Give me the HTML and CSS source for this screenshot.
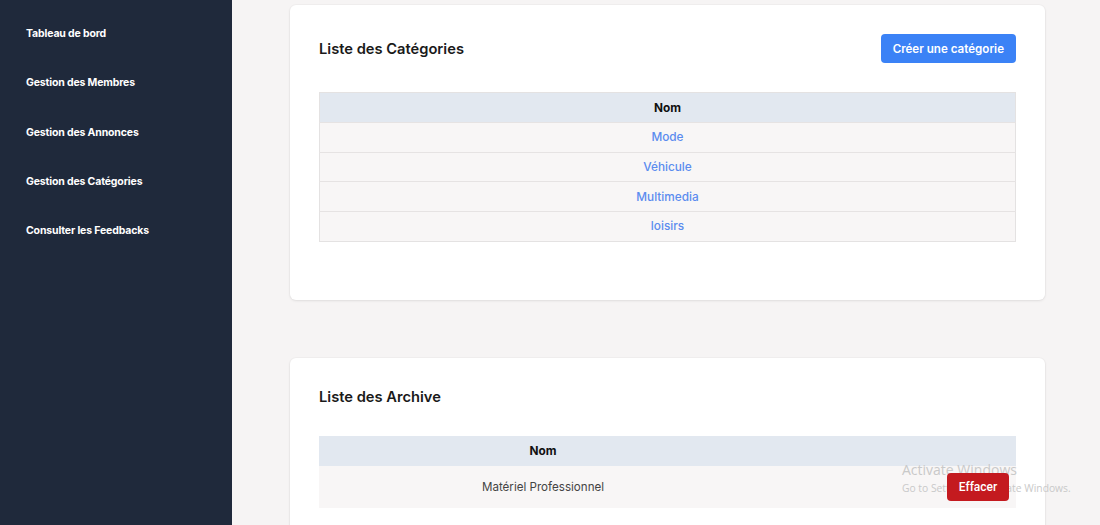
FILE: index.html
```html
<!DOCTYPE html>
<html lang="fr">
<head>
<meta charset="utf-8">
<title>Admin</title>
<link rel="stylesheet" href="styles.css">
</head>
<body>
<div class="layout">
  <aside class="sidebar">
    <nav class="nav">
      <a class="nav-item">Tableau de bord</a>
      <a class="nav-item">Gestion des Membres</a>
      <a class="nav-item">Gestion des Annonces</a>
      <a class="nav-item">Gestion des Catégories</a>
      <a class="nav-item">Consulter les Feedbacks</a>
    </nav>
  </aside>
  <main class="main">
    <section class="card card-cat">
      <div class="card-head">
        <h2 class="card-title">Liste des Catégories</h2>
        <button class="btn btn-blue">Créer une catégorie</button>
      </div>
      <table class="table table-cat">
        <thead><tr><th>Nom</th></tr></thead>
        <tbody>
          <tr><td class="link">Mode</td></tr>
          <tr><td class="link">Véhicule</td></tr>
          <tr><td class="link">Multimedia</td></tr>
          <tr><td class="link">loisirs</td></tr>
        </tbody>
      </table>
    </section>
    <section class="card card-arch">
      <div class="card-head head-arch">
        <h2 class="card-title">Liste des Archive</h2>
      </div>
      <table class="table table-arch">
        <thead><tr><th class="col-name">Nom</th><th></th></tr></thead>
        <tbody>
          <tr><td class="plain">Matériel Professionnel</td><td class="actions"><button class="btn btn-red">Effacer</button></td></tr>
        </tbody>
      </table>
    </section>
  </main>
</div>
<div class="watermark">
  <div class="wm-title">Activate Windows</div>
  <div class="wm-sub">Go to Settings to activate Windows.</div>
</div>
</body>
</html>
```
FILE: styles.css
```css
* { box-sizing: border-box; }
html, body { margin: 0; padding: 0; }
body {
  font-family: Inter, "Noto Sans", "Liberation Sans", sans-serif;
  background: #f6f4f4;
  overflow: hidden;
}
.layout {
  display: flex;
  min-height: 525px;
}
.sidebar {
  width: 232px;
  flex: 0 0 232px;
  background: #1f293b;
  min-height: 525px;
}
.nav {
  display: flex;
  flex-direction: column;
  padding-top: 9px;
}
.nav-item {
  height: 49.3px;
  display: flex;
  align-items: center;
  padding-left: 26px;
  color: #ffffff;
  font-size: 10.5px;
  font-weight: 700;
  letter-spacing: -0.15px;
}
.main {
  flex: 1;
  padding: 5px 55px 0 58px;
  display: flex;
  flex-direction: column;
  gap: 58px;
}
.card {
  background: #ffffff;
  border-radius: 6px;
  box-shadow: 0 1px 3px rgba(0,0,0,0.08), 0 0 0 1px rgba(0,0,0,0.02);
  padding: 29px 29px 58px 29px;
}
.card-arch {
  padding-top: 25px;
  padding-bottom: 40px;
}
.card-head {
  display: flex;
  justify-content: space-between;
  align-items: center;
  height: 29px;
  margin-bottom: 29px;
}
.head-arch { margin-bottom: 24px; }
.card-title {
  margin: 0;
  font-size: 14.7px;
  font-weight: 600;
  color: #1a1a1a;
}
.btn {
  border: none;
  font-family: Inter, "Noto Sans", sans-serif;
  color: #fff;
  cursor: pointer;
}
.btn-blue {
  background: #3b82f6;
  height: 29px;
  padding: 0 12px;
  border-radius: 4px;
  font-size: 11.6px;
  font-weight: 600;
}
.btn-red {
  background: #c41a1f;
  height: 28px;
  width: 62px;
  padding: 0;
  border-radius: 4px;
  font-size: 12px;
  font-weight: 500;
  font-family: Roboto, "Noto Sans", sans-serif;
  position: relative;
  z-index: 2;
}
.table {
  width: 100%;
  border-collapse: collapse;
  border: 1px solid #e4e2e2;
  font-size: 11.8px;
}
.table th {
  background: #e2e8f0;
  color: #111;
  font-weight: 700;
  height: 30px;
  padding: 0;
  text-align: center;
}
.table td {
  background: #f8f6f6;
  border-top: 1px solid #e6e3e3;
  height: 29.7px;
  padding: 0;
  text-align: center;
}
.link {
  color: #5b8cef;
  font-weight: 500;
}
.table-arch { border: none; }
.table-arch td { border-top: none; height: 42px; }
.col-name { width: 448px; }
.plain { color: #444; font-weight: 400; font-size: 11.6px; }
.actions { text-align: right !important; padding-right: 7px !important; }
.watermark {
  position: absolute;
  left: 902px;
  top: 461px;
  color: #c9c9c9;
  font-family: "Open Sans", "Noto Sans", sans-serif;
  z-index: 1;
  pointer-events: none;
}
.wm-title { font-size: 14px; line-height: 18px; }
.wm-sub { font-size: 10.3px; line-height: 16px; margin-top: 1px; }
```
